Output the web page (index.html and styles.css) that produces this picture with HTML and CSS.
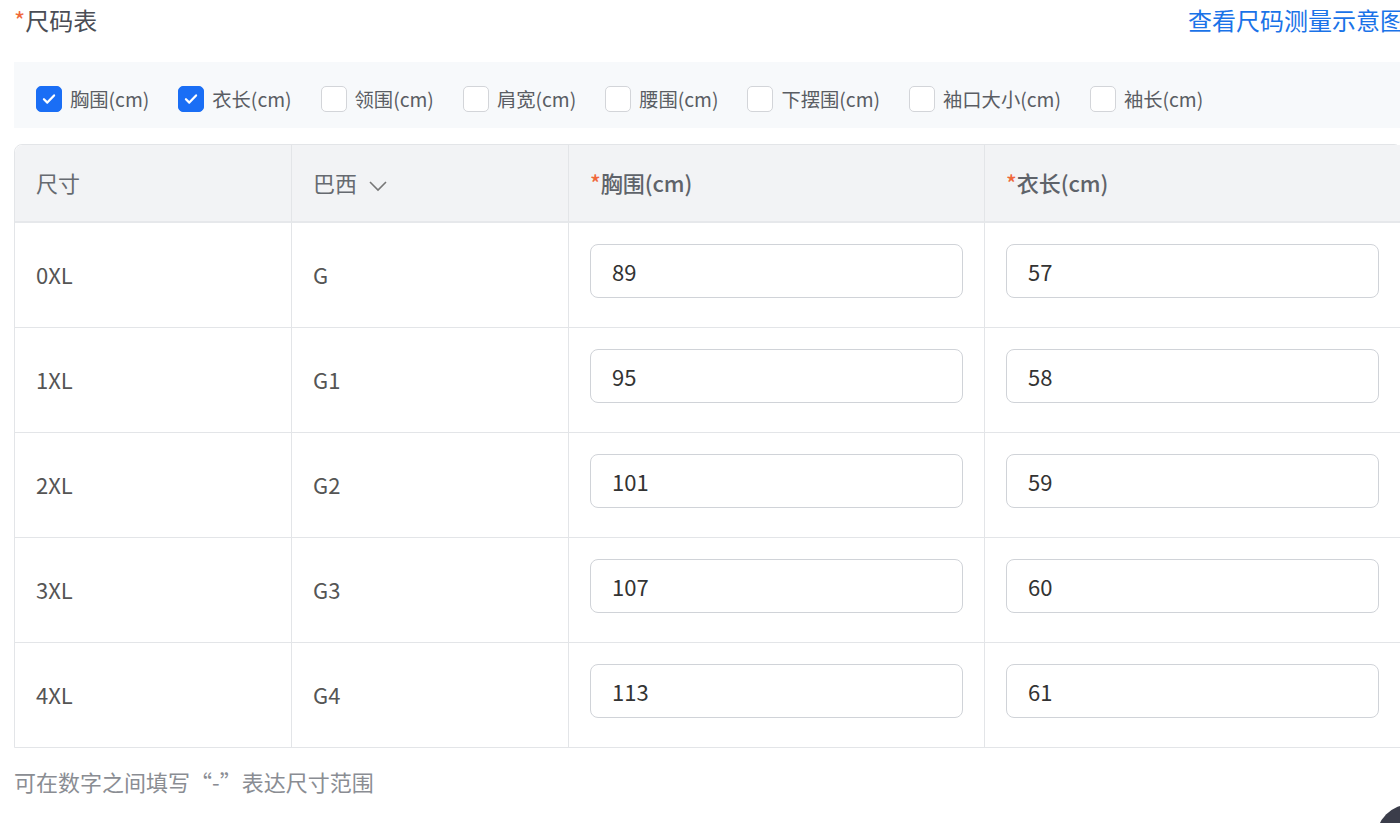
FILE: index.html
```html
<!DOCTYPE html>
<html lang="zh-CN">
<head>
    <meta charset="UTF-8">
    <meta name="viewport" content="width=device-width, initial-scale=1.0">
    <title>尺码表</title>
    <link rel="stylesheet" href="styles.css">
</head>
<body>

    <div class="size-form">
        <div class="form-head">
            <div class="form-title"><span class="req">*</span>尺码表</div>
            <a class="guide-link" href="#">查看尺码测量示意图</a>
        </div>

        <div class="measure-bar">
            <label class="check checked"><span class="box"><svg viewBox="0 0 16 16"><path d="M3.5 8.2l3 3 6-6.4"/></svg></span>胸围(cm)</label>
            <label class="check checked"><span class="box"><svg viewBox="0 0 16 16"><path d="M3.5 8.2l3 3 6-6.4"/></svg></span>衣长(cm)</label>
            <label class="check"><span class="box"></span>领围(cm)</label>
            <label class="check"><span class="box"></span>肩宽(cm)</label>
            <label class="check"><span class="box"></span>腰围(cm)</label>
            <label class="check"><span class="box"></span>下摆围(cm)</label>
            <label class="check"><span class="box"></span>袖口大小(cm)</label>
            <label class="check"><span class="box"></span>袖长(cm)</label>
        </div>

        <table class="size-table">
            <colgroup>
                <col class="col-size">
                <col class="col-size">
                <col class="col-measure">
                <col class="col-measure">
            </colgroup>
            <thead>
                <tr>
                    <th>尺寸</th>
                    <th>巴西 <svg class="chevron" viewBox="0 0 20 12"><path d="M2 2l8 8 8-8"/></svg></th>
                    <th class="strong"><span class="req">*</span>胸围(cm)</th>
                    <th class="strong"><span class="req">*</span>衣长(cm)</th>
                </tr>
            </thead>
            <tbody>
                <tr>
                    <td>0XL</td>
                    <td>G</td>
                    <td><input class="cell-input" type="text" value="89"></td>
                    <td><input class="cell-input" type="text" value="57"></td>
                </tr>
                <tr>
                    <td>1XL</td>
                    <td>G1</td>
                    <td><input class="cell-input" type="text" value="95"></td>
                    <td><input class="cell-input" type="text" value="58"></td>
                </tr>
                <tr>
                    <td>2XL</td>
                    <td>G2</td>
                    <td><input class="cell-input" type="text" value="101"></td>
                    <td><input class="cell-input" type="text" value="59"></td>
                </tr>
                <tr>
                    <td>3XL</td>
                    <td>G3</td>
                    <td><input class="cell-input" type="text" value="107"></td>
                    <td><input class="cell-input" type="text" value="60"></td>
                </tr>
                <tr>
                    <td>4XL</td>
                    <td>G4</td>
                    <td><input class="cell-input" type="text" value="113"></td>
                    <td><input class="cell-input" type="text" value="61"></td>
                </tr>
            </tbody>
        </table>

        <p class="hint">可在数字之间填写“-”表达尺寸范围</p>
    </div>

    <div class="float-btn"></div>

</body>
</html>
```

FILE: styles.css
```css
html, body {
    overflow: hidden;
}
body {
    margin: 0;
    font-family: "Noto Sans CJK SC", "Noto Sans", sans-serif;
    background-color: #fff;
    color: #555;
}
.size-form {
    width: 1400px;
    padding-left: 14px;
    box-sizing: border-box;
}
.form-head {
    display: flex;
    justify-content: space-between;
    align-items: center;
    height: 38px;
    margin-right: -4px;
}
.form-title {
    font-size: 24px;
    color: #4a4d55;
}
.req {
    color: #f0683a;
}
.guide-link {
    font-size: 24px;
    color: #1a73e8;
    text-decoration: none;
    white-space: nowrap;
}
.measure-bar {
    display: flex;
    align-items: center;
    gap: 29px;
    margin-top: 24px;
    height: 66px;
    padding: 8px 0 0 22px;
    box-sizing: border-box;
    background-color: #f7f9fb;
    margin-right: -20px;
}
.check {
    display: flex;
    align-items: center;
    gap: 8px;
    font-size: 19.3px;
    color: #5a5d63;
    white-space: nowrap;
}
.box {
    width: 24px;
    height: 24px;
    border: 1px solid #d3d5d9;
    border-radius: 5px;
    background-color: #fff;
    display: flex;
    align-items: center;
    justify-content: center;
}
.checked .box {
    background-color: #1a6ef5;
    border-color: #1a6ef5;
}
.box svg {
    width: 18px;
    height: 18px;
    fill: none;
    stroke: #fff;
    stroke-width: 2;
    stroke-linecap: round;
    stroke-linejoin: round;
}
.size-table {
    margin-top: 16px;
    width: 1388px;
    border-collapse: separate;
    border-spacing: 0;
    border: 1px solid #e3e5e8;
    border-radius: 8px 8px 0 0;
    table-layout: fixed;
}
.col-size {
    width: 277px;
}
.col-measure {
    width: 416px;
}
.size-table th {
    height: 73px;
    padding: 0 0 3px 21px;
    background-color: #f2f3f5;
    text-align: left;
    font-size: 22px;
    font-weight: 400;
    color: #666a70;
    border-bottom: 2px solid #e6e8eb;
    border-right: 1px solid #e3e5e8;
}
.size-table th:first-child {
    border-top-left-radius: 8px;
}
.size-table th.strong {
    font-weight: 500;
    color: #5f636a;
}
.chevron {
    width: 20px;
    height: 12px;
    margin-left: 6px;
    fill: none;
    stroke: #777;
    stroke-width: 1.6;
}
.size-table td {
    height: 101px;
    padding: 0 21px 3px;
    font-size: 22px;
    color: #555;
    border-bottom: 1px solid #e3e5e8;
    border-right: 1px solid #e3e5e8;
}
.size-table tr:last-child td {
    border-bottom: none;
}
.cell-input {
    display: block;
    width: 100%;
    height: 54px;
    box-sizing: border-box;
    padding: 0 21px;
    margin-top: -6px;
    border: 1px solid #d0d3d8;
    border-radius: 8px;
    font-family: inherit;
    font-size: 22px;
    color: #333;
    background-color: #fff;
}
.hint {
    margin: 17px 0 0;
    font-size: 22px;
    color: #8a8d93;
}
.float-btn {
    position: fixed;
    left: 1376px;
    top: 804px;
    width: 70px;
    height: 70px;
    border-radius: 50%;
    background-color: #3b3d4a;
}
```
